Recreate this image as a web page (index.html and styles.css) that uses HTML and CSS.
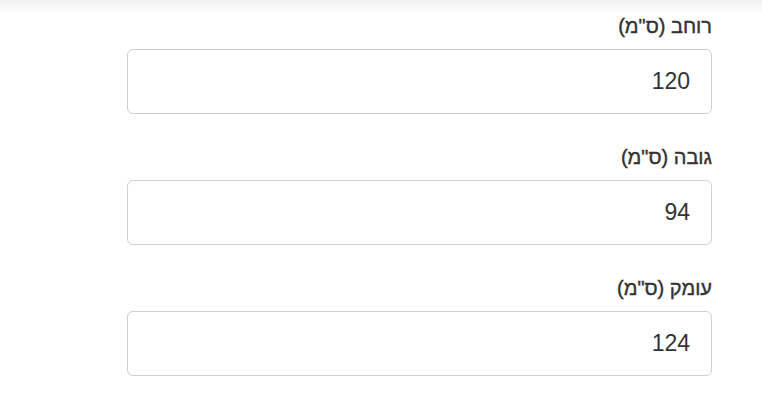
FILE: index.html
```html
<!DOCTYPE html>
<html lang="he" dir="rtl">
<head>
   <meta charset="utf-8">
   <title>מידות</title>
   <link rel="stylesheet" href="styles.css">
</head>
<body>
   <div class="dims-form">
       <div class="form-group">
           <label for="width">רוחב (ס"מ)</label>
           <input type="text" id="width" name="width" value="120">
       </div>
       <div class="form-group">
           <label for="height">גובה (ס"מ)</label>
           <input type="text" id="height" name="height" value="94">
       </div>
       <div class="form-group">
           <label for="depth">עומק (ס"מ)</label>
           <input type="text" id="depth" name="depth" value="124">
       </div>
   </div>
</body>
</html>
```

FILE: styles.css
```css
body {
    font-family: "Liberation Sans", Arial, sans-serif;
    margin: 0;
    background: linear-gradient(#f1f1f1, #ffffff 14px) no-repeat;
    background-color: #fff;
    color: #333;
}
.dims-form {
    width: 585px;
    margin-right: 50px;
    padding-top: 14px;
}
.form-group {
    margin-bottom: 31px;
}
label {
    display: block;
    font-size: 20px;
    line-height: 24px;
    font-weight: normal;
    -webkit-text-stroke: 0.4px #333;
    color: #333;
    margin-bottom: 11px;
}
input {
    display: block;
    box-sizing: border-box;
    width: 100%;
    height: 65px;
    padding: 0 21px;
    border: 1px solid #cfcfcf;
    border-radius: 6px;
    font-family: inherit;
    font-size: 23px;
    color: #333;
    background: #fff;
    text-align: right;
}
input:focus {
    outline: none;
    border-color: #999;
}
```
